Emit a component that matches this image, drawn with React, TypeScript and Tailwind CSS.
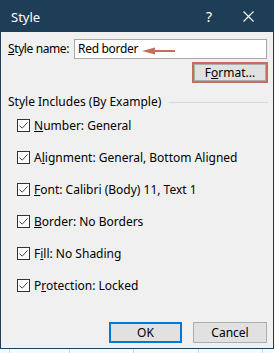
const rows = [
  { pre: "", key: "N", post: "umber: General" },
  { pre: "A", key: "l", post: "ignment: General, Bottom Aligned" },
  { pre: "", key: "F", post: "ont: Calibri (Body) 11, Text 1" },
  { pre: "", key: "B", post: "order: No Borders" },
  { pre: "F", key: "i", post: "ll: No Shading" },
  { pre: "P", key: "r", post: "otection: Locked" },
];

function CheckBox() {
  return (
    <span className="flex h-[13px] w-[13px] shrink-0 items-center justify-center border border-[#333333] bg-white">
      <svg width="11" height="11" viewBox="0 0 11 11" fill="none">
        <path d="M1.5 5.5 L4.2 8.2 L9.5 2.5" stroke="#444444" strokeWidth="1" />
      </svg>
    </span>
  );
}

export default function App() {
  return (
    <div className="h-[353px] w-[275px] overflow-hidden bg-[#fafafa] font-['Noto_Sans',sans-serif] text-[12px] leading-[16px] text-black">
      <div className="flex h-[349px] w-[274px] flex-col border border-[#1e3e58] bg-[#f0f0f0]">
        {/* title bar */}
        <div className="flex h-[31px] shrink-0 items-center bg-[#1e3e58] pl-[10px] text-white">
          <span className="text-[13px]">Style</span>
          <span className="ml-auto mr-[31px] text-[14px]">?</span>
          <svg width="11" height="11" viewBox="0 0 11 11" className="mr-[19px]">
            <path d="M0.5 0.5 L10.5 10.5 M10.5 0.5 L0.5 10.5" stroke="white" strokeWidth="1.1" />
          </svg>
        </div>

        {/* style name */}
        <div className="mt-[7px] flex h-[20px] items-center pl-[7px]">
          <span className="w-[66px] tracking-[-0.4px]">
            <span className="underline">S</span>tyle name:
          </span>
          <div className="relative flex h-[20px] w-[193px] items-center border border-[#a8a8a8] bg-white pl-[3px] tracking-[-0.3px]">
            Red border
            <svg
              width="34"
              height="8"
              viewBox="0 0 34 8"
              className="absolute left-[67px] top-[7px]"
            >
              <path d="M0 4 L13 0.5 L13 7.5 Z" fill="#c46f5d" />
              <path d="M12 4 L33 4" stroke="#c46f5d" strokeWidth="2" />
            </svg>
          </div>
        </div>

        {/* format */}
        <div className="mt-[3px] flex justify-end pr-[5px]">
          <div className="h-[21px] w-[76px] border-2 border-[#c46f5d] bg-[#e1e1e1]">
            <div className="flex h-full items-center justify-center border border-[#adadad]">
              F<span className="underline">o</span>rmat...
            </div>
          </div>
        </div>

        {/* group header */}
        <div className="mt-[11px] flex items-center pl-[7px] pr-[5px]">
          <span>Style Includes (By Example)</span>
          <div className="ml-[8px] h-px flex-1 bg-[#dadada]" />
        </div>

        {/* checkboxes */}
        <div className="mt-[9px] flex flex-col gap-[19px] pl-[16px]">
          {rows.map((r) => (
            <div key={r.post} className="flex h-[13px] items-center gap-[4px]">
              <CheckBox />
              <span>
                {r.pre}
                <span className="underline">{r.key}</span>
                {r.post}
              </span>
            </div>
          ))}
        </div>

        {/* buttons */}
        <div className="mt-auto mb-[5px] flex justify-end gap-[11px] pr-[6px]">
          <button className="flex h-[21px] w-[73px] items-center justify-center border-2 border-[#0078d7] bg-[#e1e1e1]">
            OK
          </button>
          <button className="flex h-[21px] w-[74px] items-center justify-center border border-[#adadad] bg-[#e1e1e1]">
            Cancel
          </button>
        </div>
      </div>

      {/* worksheet behind */}
      <div className="flex h-[4px]">
        <div className="w-[10px] border-r border-[#d4d4d4]" />
        <div className="w-[60px] border-r border-[#d4d4d4]" />
        <div className="w-[64px] border-r border-[#d4d4d4]" />
        <div className="w-[65px] border-r border-[#d4d4d4]" />
        <div className="w-[64px] border-r border-[#d4d4d4]" />
      </div>
    </div>
  );
}
